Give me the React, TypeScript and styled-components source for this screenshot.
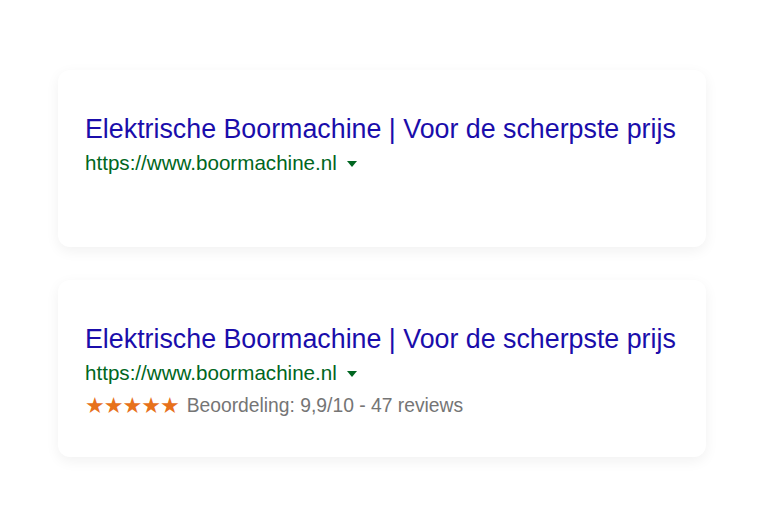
import React from "react";
import styled, { createGlobalStyle } from "styled-components";

const Global = createGlobalStyle`
  html, body { margin: 0; padding: 0; background: #ffffff; }
  body { font-family: "Liberation Sans", Arial, sans-serif; }
`;

const Page = styled.div`
  width: 768px;
  height: 512px;
  box-sizing: border-box;
  padding: 70px 62px 0 58px;
  display: flex;
  flex-direction: column;
  gap: 33px;
`;

const Card = styled.div`
  height: 177px;
  box-sizing: border-box;
  background: #fff;
  border-radius: 12px;
  box-shadow: 0 4px 14px rgba(0, 0, 0, 0.06);
  padding: 44px 27px 0 27px;
  display: flex;
  flex-direction: column;
`;

const Title = styled.div`
  color: #1a0dab;
  font-size: 26.8px;
  line-height: 30px;
  white-space: nowrap;
`;

const UrlRow = styled.div`
  display: flex;
  align-items: center;
  gap: 10px;
  color: #006621;
  font-size: 20.6px;
  line-height: 24px;
  margin-top: 7px;
`;

const Caret = styled.span`
  width: 0;
  height: 0;
  border-left: 5px solid transparent;
  border-right: 5px solid transparent;
  border-top: 6px solid #006621;
  margin-top: 1px;
`;

const RatingRow = styled.div`
  display: flex;
  align-items: center;
  gap: 8px;
  font-size: 19.3px;
  line-height: 26px;
  color: #757575;
  margin-top: 8px;
`;

const Stars = styled.span`
  color: #e7711b;
  font-size: 22px;
  letter-spacing: -1px;
  font-family: "DejaVu Sans", sans-serif;
`;

function Result({ rating }: { rating?: boolean }) {
  return (
    <Card>
      <Title>Elektrische Boormachine | Voor de scherpste prijs</Title>
      <UrlRow>
        https://www.boormachine.nl <Caret />
      </UrlRow>
      {rating && (
        <RatingRow>
          <Stars>★★★★★</Stars>
          <span>Beoordeling: 9,9/10 - 47 reviews</span>
        </RatingRow>
      )}
    </Card>
  );
}

export default function App() {
  return (
    <>
      <Global />
      <Page>
        <Result />
        <Result rating />
      </Page>
    </>
  );
}
